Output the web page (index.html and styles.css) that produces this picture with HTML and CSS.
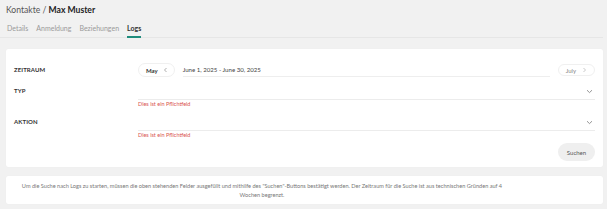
FILE: index.html
```html
<!DOCTYPE html>
<html lang="de">
<head>
<meta charset="utf-8">
<link rel="stylesheet" href="styles.css">
</head>
<body>
<div class="page">
  <h1 class="title">Kontakte / <strong>Max Muster</strong></h1>
  <nav class="tabs">
    <span class="tab">Details</span>
    <span class="tab">Anmeldung</span>
    <span class="tab">Beziehungen</span>
    <span class="tab active">Logs</span>
  </nav>
  <section class="card form">
    <div class="row">
      <div class="label">ZEITRAUM</div>
      <div class="field range">
        <span class="pill"><b>May</b><svg width="5" height="6" viewBox="0 0 5 6"><path d="M3.5 1 L1.5 3 L3.5 5" fill="none" stroke="#999" stroke-width="0.8"/></svg></span>
        <span class="date">June 1, 2025 - June 30, 2025</span>
        <span class="pill next">July<svg width="5" height="6" viewBox="0 0 5 6"><path d="M1.5 1 L3.5 3 L1.5 5" fill="none" stroke="#bbb" stroke-width="0.8"/></svg></span>
      </div>
    </div>
    <div class="row sel">
      <div class="label">TYP</div>
      <div class="field">
        <div class="select"><svg width="7" height="5" viewBox="0 0 7 5"><path d="M1 1.2 L3.5 3.6 L6 1.2" fill="none" stroke="#888" stroke-width="0.9"/></svg></div>
        <div class="error">Dies ist ein Pflichtfeld</div>
      </div>
    </div>
    <div class="row sel second">
      <div class="label">AKTION</div>
      <div class="field">
        <div class="select"><svg width="7" height="5" viewBox="0 0 7 5"><path d="M1 1.2 L3.5 3.6 L6 1.2" fill="none" stroke="#888" stroke-width="0.9"/></svg></div>
        <div class="error">Dies ist ein Pflichtfeld</div>
      </div>
    </div>
    <div class="actions"><button class="btn">Suchen</button></div>
  </section>
  <section class="card info">
    Um die Suche nach Logs zu starten, müssen die oben stehenden Felder ausgefüllt und mithilfe des "Suchen"-Buttons bestätigt werden. Der Zeitraum für die Suche ist aus technischen Gründen auf 4 Wochen begrenzt.
  </section>
</div>
</body>
</html>
```
FILE: styles.css
```css
* { box-sizing: border-box; }
html, body { margin: 0; padding: 0; }
body {
  background: #f1f1f1;
  font-family: "Lato", "Open Sans", sans-serif;
  color: #333;
  width: 607px;
  height: 209px;
  overflow: hidden;
}
.page { padding: 3px 4px 0 6px; }
.title {
  margin: 0;
  font-size: 8.6px;
  font-weight: 400;
  color: #555;
  line-height: 14px;
}
.title strong { color: #222; font-weight: 700; }
.tabs {
  display: flex;
  gap: 8px;
  margin-top: 6px;
  margin-left: -6px;
  padding-left: 7px;
  border-bottom: 1px solid #e6e6e6;
  height: 15px;
  width: 603px;
}
.tab {
  font-size: 7px;
  color: #9a9a9a;
  line-height: 10px;
}
.tab.active {
  color: #333;
  font-weight: 700;
  border-bottom: 2px solid #1f8c7c;
  height: 15px;
}
.card {
  background: #fff;
  border-radius: 2px;
  box-shadow: 0 0 1px rgba(0,0,0,0.06);
  width: 597px;
}
.form { margin-top: 11px; padding: 14px 8px 5px 8px; height: 118px; }
.row { display: flex; }
.label {
  width: 124px;
  font-size: 6px;
  font-weight: 700;
  color: #333;
  letter-spacing: 0.1px;
}
.row:first-child .label { line-height: 14px; }
.field { flex: 1; }
.range { display: flex; align-items: center; height: 14px; }
.pill {
  display: inline-flex;
  align-items: center;
  gap: 5px;
  height: 14px;
  padding: 0 6px 0 7px;
  border: 1px solid #f0f0f0;
  border-radius: 7px;
  font-size: 6px;
  color: #333;
}
.pill b { font-weight: 700; }
.date {
  flex: 1;
  margin-left: 8px;
  margin-right: 8px;
  font-size: 6.1px;
  color: #444;
  height: 14px;
  line-height: 14px;
  border-bottom: 1px solid #eee;
}
.pill.next { color: #888; height: 12px; padding: 0 7px 0 7px; gap: 6px; }
.sel { margin-top: 7px; }
.sel .label { line-height: 14px; padding-top: 0; }
.sel.second { margin-top: 8px; }
.select {
  height: 16px;
  border-bottom: 1px solid #ececec;
  display: flex;
  justify-content: flex-end;
  align-items: flex-start;
  padding-top: 5px;
  padding-right: 2px;
}
.error {
  font-size: 5.5px;
  color: #d9534f;
  line-height: 6px;
  margin-top: 1px;
}
.actions { display: flex; justify-content: flex-end; margin-top: 5px; }
.btn {
  border: none;
  background: #efefef;
  border-radius: 9px;
  width: 37px;
  height: 18px;
  font-family: inherit;
  font-size: 6px;
  color: #555;
  padding: 0;
}
.info {
  margin-top: 9px;
  padding: 5px 96px 0 11px;
  text-align: center;
  font-size: 5.6px;
  line-height: 9px;
  color: #777;
  height: 28px;
}
```
